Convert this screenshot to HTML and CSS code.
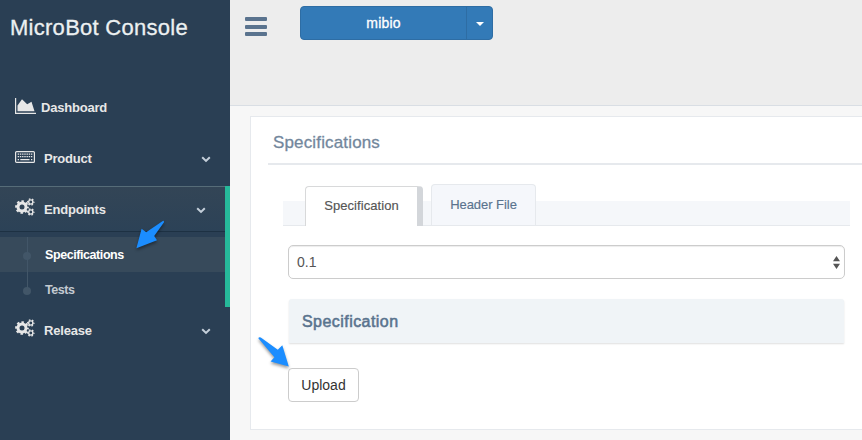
FILE: index.html
```html
<!DOCTYPE html>
<html lang="en">
<head>
<meta charset="utf-8">
<title>MicroBot Console</title>
<link rel="stylesheet" href="styles.css">
</head>
<body>
<svg width="0" height="0" class="defs">
  <defs>
    <symbol id="cogs" viewBox="0 0 20 18">
      <g fill="none" stroke="currentColor">
        <circle cx="7" cy="9" r="4" stroke-width="3"/>
        <circle cx="7" cy="9" r="5.9" stroke-width="1.9" stroke-dasharray="2.5 2.134" stroke-dashoffset="1.25"/>
        <circle cx="15.8" cy="4" r="2.1" stroke-width="1.4"/>
        <circle cx="15.8" cy="4" r="3.1" stroke-width="1.3" stroke-dasharray="1.6 1.646" stroke-dashoffset=".8"/>
        <circle cx="15.8" cy="14" r="2.1" stroke-width="1.4"/>
        <circle cx="15.8" cy="14" r="3.1" stroke-width="1.3" stroke-dasharray="1.6 1.646" stroke-dashoffset=".8"/>
      </g>
    </symbol>
    <symbol id="chevron" viewBox="0 0 10 7">
      <path d="M1.2 1.2 5 4.9 8.8 1.2" fill="none" stroke="currentColor" stroke-width="2"/>
    </symbol>
  </defs>
</svg>
<div class="app">
  <nav class="sidebar">
    <div class="brand"><span>MicroBot Console</span></div>
    <ul class="menu">
      <li class="item">
        <a class="link dash">
          <svg class="icon area" viewBox="0 0 21 16"><path d="M0 0h1.2v14.8H21V16H0z" fill="currentColor"/><path d="M2.5 13.2V7.5L7 1.2l5.2 5.1 4.3-2.5 3 9.4z" fill="currentColor"/></svg>
          <span class="label">Dashboard</span>
        </a>
      </li>
      <li class="item">
        <a class="link">
          <svg class="icon keyboard" viewBox="0 0 20 12"><rect x=".6" y=".6" width="18.8" height="10.8" rx="1" fill="none" stroke="currentColor" stroke-width="1.2"/><path d="M2.7 3.2h14.6M2.7 5.7h14.6" stroke="currentColor" stroke-width="1.3" stroke-dasharray="1.4 .8"/><path d="M2.7 8.7H4M5.3 8.7h9.2M16 8.7h1.3" stroke="currentColor" stroke-width="1.3"/></svg>
          <span class="label">Product</span>
          <svg class="chevron"><use href="#chevron"/></svg>
        </a>
      </li>
      <li class="item active">
        <a class="link">
          <svg class="icon cogs"><use href="#cogs"/></svg>
          <span class="label">Endpoints</span>
          <svg class="chevron"><use href="#chevron"/></svg>
        </a>
        <ul class="submenu">
          <li class="sub current"><span>Specifications</span></li>
          <li class="sub"><span>Tests</span></li>
        </ul>
      </li>
      <li class="item">
        <a class="link">
          <svg class="icon cogs"><use href="#cogs"/></svg>
          <span class="label">Release</span>
          <svg class="chevron"><use href="#chevron"/></svg>
        </a>
      </li>
    </ul>
  </nav>
  <main class="content">
    <header class="topbar">
      <div class="burger"><i></i><i></i><i></i></div>
      <div class="btn-group">
        <div class="btn-main"><span>mibio</span></div>
        <div class="btn-caret"><i></i></div>
      </div>
    </header>
    <section class="panel">
      <h2 class="panel-title"><span>Specifications</span></h2>
      <div class="tabs">
        <div class="tab selected"><span>Specification</span></div>
        <div class="tab"><span>Header File</span></div>
      </div>
      <div class="select">
        <span>0.1</span>
        <svg class="arrows" viewBox="0 0 7 13"><path d="M3.5 0 7 5.3H0zM3.5 13 7 7.7H0z" fill="#555"/></svg>
      </div>
      <div class="section-head"><span>Specification</span></div>
      <button class="upload"><span>Upload</span></button>
    </section>
  </main>
</div>
<svg class="pointer to-menu" width="36" height="40" viewBox="0 0 36 40"><path d="M29.4 4.2Q31 3.2 31 5.2L21.2 19 24 23.2 3.4 31.2 8.6 11.8 13.2 15.2z"/></svg>
<svg class="pointer to-upload" width="40" height="40" viewBox="0 0 40 40"><path d="M3.3 4.3Q4 2.6 5.8 3.6L22.8 15.8 27.3 11.2 33.8 32.5 15.6 27.6 19.4 23.2z"/></svg>
</body>
</html>
```

FILE: styles.css
```css
* { box-sizing: border-box; }
body {
  margin: 0;
  height: 440px;
  overflow: hidden;
  background: #f7f7f7;
  font-family: "Liberation Sans", Arial, sans-serif;
  font-size: 13px;
  color: #73879c;
}
ul { list-style: none; margin: 0; padding: 0; }
.defs { position: absolute; }
.app { display: flex; height: 440px; }

.sidebar { width: 230px; flex: none; background: #2a3f54; color: #e7e7e7; }
.brand {
  height: 84px;
  padding: 13px 0 0 10px;
  font-size: 22px;
  line-height: 30px;
  color: #ecf0f1;
  letter-spacing: .27px;
  white-space: nowrap;
  -webkit-text-stroke: .3px #ecf0f1;
}
.item { margin-bottom: 6px; }
.link { display: flex; align-items: center; height: 45px; padding: 0 19px 0 15px; }
.icon { flex: none; width: 20px; }
.area { width: 21px; height: 16px; margin-top: -2px; }
.keyboard { height: 12px; margin-top: -1px; }
.cogs { height: 18px; margin-top: -4px; }
.label { flex: 1; margin-left: 9px; padding-top: 2px; font-weight: bold; letter-spacing: -.2px; }
.dash .label { margin-left: 5px; }
.chevron { width: 10px; height: 7px; margin-top: 3px; color: #c4cfda; }
.active { margin-bottom: 0; border-right: 5px solid #26b99a; }
.active .link {
  height: 46px;
  border-top: 1px solid #566c78;
  border-bottom: 1px solid #1d3143;
  background: linear-gradient(#334556, #2c4257);
}
.active .label { padding-top: 0; }
.submenu { padding-top: 5px; }
.sub {
  position: relative;
  height: 35px;
  padding-left: 45px;
  line-height: 37px;
  font-size: 12.5px;
  font-weight: bold;
  letter-spacing: -.42px;
  color: #c3cad1;
}
.current { background: #374a5b; color: #fff; }
.sub::before {
  content: "";
  position: absolute;
  left: 23px;
  top: 15px;
  width: 8px;
  height: 8px;
  border-radius: 50%;
  background: #425668;
}
.sub::after {
  content: "";
  position: absolute;
  left: 27px;
  top: 0;
  width: 1px;
  height: 35px;
  background: #425668;
}
.sub:last-child::after { height: 19px; }

.content { flex: 1; min-width: 0; }
.topbar {
  display: flex;
  height: 106px;
  padding: 6px 0 0 15px;
  background: #ededed;
  border-bottom: 1px solid #d9dee4;
}
.burger { display: flex; flex-direction: column; gap: 3.5px; width: 22px; margin-right: 33px; padding-top: 11px; }
.burger i { height: 4px; border-radius: 1px; background: #5a738e; }
.btn-group {
  display: flex;
  width: 193px;
  height: 34px;
  border: 1px solid #2e6da4;
  border-radius: 4px;
  background: #337ab7;
  color: #fff;
}
.btn-main { flex: 1; font-size: 14px; line-height: 32px; text-align: center; letter-spacing: .2px; -webkit-text-stroke: .3px #fff; }
.btn-caret { display: flex; align-items: center; justify-content: center; width: 26px; border-left: 1px solid #2e6da4; }
.btn-caret i { border: 4px solid transparent; border-top-color: #fff; border-bottom: 0; margin-top: 2px; }

.panel {
  width: 640px;
  height: 314px;
  margin: 10px 0 0 20px;
  padding: 0 17px;
  background: #fff;
  border: 1px solid #e6e9ed;
}
.panel-title {
  height: 48px;
  margin: 0;
  padding-left: 5px;
  border-bottom: 2px solid #e6e9ed;
  font-size: 17px;
  line-height: 51px;
  font-weight: normal;
  letter-spacing: .15px;
  -webkit-text-stroke: .3px;
}
.tabs {
  display: flex;
  align-items: flex-end;
  width: 567px;
  height: 25px;
  margin: 36px 0 0 15px;
  padding-left: 22px;
  background: #f5f7fa;
  border-bottom: 1px solid #e6e9ed;
}
.tab {
  width: 105px;
  height: 41px;
  border: 1px solid #e6e9ed;
  border-bottom: 0;
  border-radius: 4px 4px 0 0;
  background: #f5f7fb;
  color: #5a738e;
  line-height: 39px;
  text-align: center;
  letter-spacing: -.05px;
  -webkit-text-stroke: .15px;
}
.selected {
  width: 118px;
  height: 40px;
  margin: 0 8px -1px 0;
  border-color: #d8d9da;
  border-right: 6px solid #d3d6da;
  background: #fff;
  color: #555;
  line-height: 37px;
  letter-spacing: .08px;
}
.select {
  display: flex;
  align-items: center;
  justify-content: space-between;
  width: 557px;
  height: 34px;
  margin: 19px 0 0 20px;
  padding: 0 4px 0 8px;
  border: 1px solid #ccc;
  border-radius: 5px;
  box-shadow: inset 0 1px 1px rgba(0,0,0,.075);
  color: #555;
  font-size: 14px;
}
.arrows { width: 7px; height: 13px; }
.section-head {
  width: 555px;
  height: 44px;
  margin: 20px 0 0 21px;
  padding-left: 13px;
  border-radius: 3px 3px 0 0;
  background: #f0f4f7;
  box-shadow: 0 1px 2px rgba(0,0,0,.13);
  color: #5a738e;
  font-size: 16px;
  line-height: 45px;
  letter-spacing: .45px;
  -webkit-text-stroke: .55px #5a738e;
}
.upload {
  display: block;
  width: 71px;
  height: 34px;
  margin: 25px 0 0 20px;
  padding: 0;
  border: 1px solid #ccc;
  border-radius: 4px;
  background: #fff;
  color: #333;
  font: 14px/32px "Liberation Sans", Arial, sans-serif;
}
.pointer { position: absolute; fill: #1b8dff; filter: drop-shadow(0 2px 1.5px rgba(0,0,0,.4)); }
.to-menu { left: 133px; top: 217px; }
.to-upload { left: 255px; top: 334px; }
```
